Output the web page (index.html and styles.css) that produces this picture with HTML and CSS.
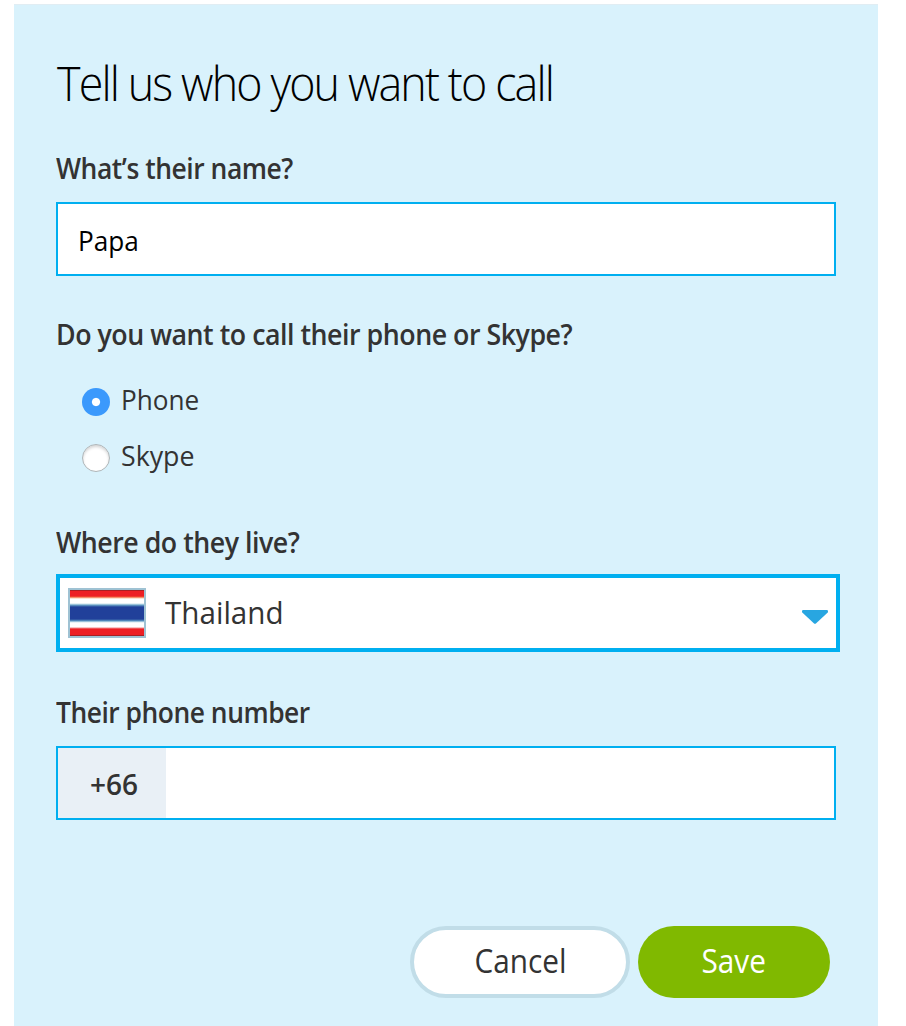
FILE: index.html
```html
<!DOCTYPE html>
<html lang="en">
<head>
<meta charset="utf-8">
<title>Tell us who you want to call</title>
<link rel="stylesheet" href="styles.css">
</head>
<body>
<form class="panel">
  <h1 class="title"><span class="t-title">Tell us who you want to call</span></h1>

  <div class="label"><span class="t-name">What’s their name?</span></div>
  <div class="field field-name"><span class="t-papa">Papa</span></div>

  <div class="label label-method"><span class="t-method">Do you want to call their phone or Skype?</span></div>
  <div class="options">
    <div class="option"><span class="radio radio-on"></span><span class="t-phone">Phone</span></div>
    <div class="option"><span class="radio"></span><span class="t-skype">Skype</span></div>
  </div>

  <div class="label label-country"><span class="t-where">Where do they live?</span></div>
  <div class="select">
    <span class="flag"></span>
    <span class="country"><span class="t-thailand">Thailand</span></span>
    <svg class="arrow" width="26" height="14" viewBox="0 0 26 14"><path d="M1.2 0H24.8Q26 0 26 1.2V2.3L14.2 13.3Q13 14.4 11.8 13.3L0 2.3V1.2Q0 0 1.2 0Z" fill="#28a6e1"/></svg>
  </div>

  <div class="label label-number"><span class="t-number">Their phone number</span></div>
  <div class="field field-number"><div class="prefix"><span class="t-prefix">+66</span></div></div>

  <div class="actions">
    <div class="button cancel"><span class="t-cancel">Cancel</span></div>
    <div class="button save"><span class="t-save">Save</span></div>
  </div>
</form>
</body>
</html>
```
FILE: styles.css
```css
* { box-sizing: border-box; }
body {
  margin: 0;
  padding: 4px 28px 0 14px;
  height: 1026px;
  overflow: hidden;
  background: #fff;
  color: #333;
  font-family: "Open Sans", "Noto Sans", sans-serif;
  font-size: 28px;
  white-space: nowrap;
}
.panel {
  height: 1022px;
  padding: 41px 42px 0;
  background: #d9f2fc;
  border-top: 1px solid #e1edf3;
}
.title {
  margin: 0;
  height: 71px;
  line-height: 74px;
  color: #000;
  font-size: 48px;
  font-weight: 300;
}
/* Condensed text runs */
[class^="t-"] {
  display: inline-block;
  transform-origin: 0 50%;
}
.t-title { letter-spacing: -2px; transform: translateX(1px) scaleX(.934); }
.label [class^="t-"] { letter-spacing: -.5px; }
.t-name { transform: scaleX(.945); }
.t-method { transform: scaleX(.956); }
.t-where { transform: scaleX(.955); }
.t-number { transform: scaleX(.942); }
.t-papa { transform: scaleX(.935); }
.t-phone { transform: scaleX(.935); }
.t-skype { transform: scaleX(.955); }
.t-thailand { transform: scaleX(.955); }
.button .t-cancel, .button .t-save {
  transform: scaleX(.93);
  transform-origin: 50% 50%;
}
.label {
  height: 40px;
  margin-top: 30px;
  line-height: 42px;
  font-weight: 600;
}
.field {
  width: 780px;
  height: 74px;
  border: 2px solid #00aff0;
  background: #fff;
}
.field-name {
  margin-top: 15px;
  padding-left: 20px;
  line-height: 72px;
  color: #000;
}
.label-method { margin-top: 37px; }
.options { padding: 26px 0 0 26px; }
.option {
  display: flex;
  height: 56px;
  line-height: 41px;
}
.radio {
  width: 28px;
  height: 28px;
  margin: 9px 11px 0 0;
  border-radius: 50%;
  border: 1px solid #aeb5b8;
  background: #fff;
  box-shadow: inset 0 2px 3px #d6d6d6;
}
.radio-on {
  border: 0;
  background: radial-gradient(circle, #fff 3.6px, #3b99fc 4.6px);
  box-shadow: none;
}
.label-country { margin-top: 30px; }
.select {
  display: flex;
  width: 784px;
  height: 78px;
  margin-top: 13px;
  padding: 10px 8px;
  border: 4px solid #00aff0;
  background: #fff;
}
.flag {
  width: 78px;
  height: 50px;
  border: 2px solid #9fc2d3;
  background: linear-gradient(#a91f23 0 1px, #ed1f24 1px 6px, #f15a39 7px, #f9c3a2 8px, #fff 9px 13px, #c9e1ec 14px, #69a4c8 15px, #21409a 17px 29px, #5d9bc4 31px, #d4e7f0 32px, #fff 33px 37px, #f28a8c 38px, #ed1f24 39px 45px, #a91f23 45px);
}
.country {
  flex: 1;
  margin-left: 19px;
  line-height: 49px;
  font-size: 31px;
}
.arrow { margin-top: 22px; }
.label-number { margin-top: 39px; }
.field-number { margin-top: 15px; }
.prefix {
  width: 108px;
  height: 70px;
  padding-left: 32px;
  background: #e9f0f6;
  line-height: 73px;
  font-weight: 600;
}
.actions {
  display: flex;
  justify-content: flex-end;
  gap: 8px;
  margin: 106px 6px 0 0;
}
.button {
  height: 72px;
  border-radius: 36px;
  line-height: 69px;
  text-align: center;
  font-size: 32px;
}
.cancel {
  width: 220px;
  border: 4px solid #c1dde8;
  background: #fff;
  line-height: 61px;
}
.save {
  width: 192px;
  background: #80b900;
  color: #fff;
}
```
